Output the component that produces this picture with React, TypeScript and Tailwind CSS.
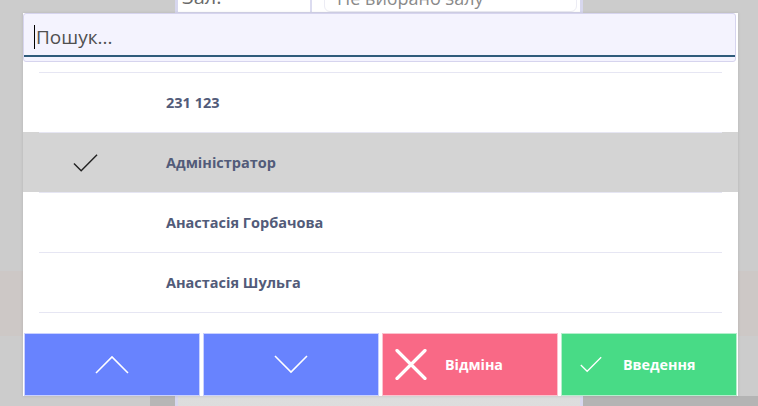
import React from "react";

const users = [
  { name: "231 123", selected: false },
  { name: "Адміністратор", selected: true },
  { name: "Анастасія Горбачова", selected: false },
  { name: "Анастасія Шульга", selected: false },
];

function Check({ className }: { className?: string }) {
  return (
    <svg viewBox="0 0 26 20" className={className} fill="none">
      <path d="M1 10.5 L8.5 18 L25 1.5" stroke="currentColor" strokeWidth="1.5" />
    </svg>
  );
}

function Chevron({ up }: { up?: boolean }) {
  return (
    <svg viewBox="0 0 34 19" className="w-[34px] h-[19px]" fill="none">
      <path d={up ? "M1 18 L17 2 L33 18" : "M1 1 L17 17 L33 1"} stroke="white" strokeWidth="1.6" />
    </svg>
  );
}

function Cross() {
  return (
    <svg viewBox="0 0 32 31" className="w-[32px] h-[31px]" fill="none">
      <path d="M2 1.5 L30 29.5 M30 1.5 L2 29.5" stroke="white" strokeWidth="3.2" strokeLinecap="round" />
    </svg>
  );
}

export default function App() {
  return (
    <div
      className="relative w-full h-[406px] overflow-hidden bg-[#cccccc]"
      style={{ fontFamily: '"Open Sans", "Noto Sans", sans-serif' }}
    >
      {/* page behind */}
      <div className="flex flex-col h-full">
        <div className="h-[271px]" />
        <div className="h-[65px] bg-[#cdc8c6]" />
        <div className="h-[60px]" />
        <div className="flex-1 flex">
          <div className="w-[150px]" />
          <div className="w-[26px] bg-[#b6b6b6]" />
          <div className="w-[407px]" />
          <div className="flex-1 bg-[#b4b4b4]" />
        </div>
      </div>

      {/* dialog behind */}
      <div className="absolute left-[175px] top-[-18px] w-[408px] h-[440px] flex flex-col border-x-[3px] border-[#d7d7ee] bg-[#e6e6e6]">
        <div className="flex h-[31px] bg-white border-b border-[#d6d6ec]">
          <div className="w-[134px] border-r-2 border-[#dcdcf0] pl-[4px] pt-[2px] text-[20px] leading-[26px] text-[#6a6a6a]">
            Зал:
          </div>
          <div className="flex-1 pl-[12px] pr-[3px]">
            <div className="h-full rounded-b-md border border-[#ececf4] pl-[12px] pt-[3px] text-[18px] leading-[24px] text-[#8a8a8a]">
              Не вибрано залу
            </div>
          </div>
        </div>
        <div className="flex-1 bg-gradient-to-b from-[#ececec] to-[#dcdcdc]" />
      </div>

      {/* select popup */}
      <div className="absolute left-[23px] top-[13px] w-[715px] h-[383px] bg-white flex flex-col shadow-[0_0_3px_rgba(0,0,0,0.12)]">
        <div className="h-[49px] mr-[2px] rounded-[3px] border border-[#d6d4ee] bg-[#f4f3fe] pt-[5px]">
          <div className="h-[38px] border-b-2 border-[#2f5b7b] flex items-center pl-[10px]">
            <span className="w-px h-[24px] bg-black mr-[1px]" />
            <span className="text-[19px] text-[#505050]">Пошук...</span>
          </div>
        </div>

        <div className="mt-[10px] flex flex-col">
          {users.map((u) => (
            <div key={u.name} className={u.selected ? "bg-[#d4d4d4]" : ""}>
              <div className="mx-4 h-[60px] border-t border-[#e6e6f3] flex items-center">
                <div className="w-[127px] pl-[34px] flex items-center">
                  {u.selected && <Check className="w-[25px] h-[20px] text-[#222]" />}
                </div>
                <span className="text-[14.5px] font-bold text-[#525b79]">{u.name}</span>
              </div>
            </div>
          ))}
          <div className="mx-4 border-t border-[#e6e6f3]" />
        </div>

        <div className="mt-auto flex gap-[3px] pl-px h-[63px]">
          <button className="w-[176px] h-full bg-[#6883fe] border border-[#c9d1ff] flex items-center justify-center">
            <Chevron up />
          </button>
          <button className="w-[176px] h-full bg-[#6883fe] border border-[#c9d1ff] flex items-center justify-center">
            <Chevron />
          </button>
          <button className="w-[176px] h-full bg-[#f96986] border border-[#fbc3cf] flex items-center pl-[12px] gap-[18px]">
            <Cross />
            <span className="text-[14.3px] font-bold text-white">Відміна</span>
          </button>
          <button className="w-[176px] h-full bg-[#48db86] border border-[#b5efcd] flex items-center pl-[17px] gap-[20px]">
            <Check className="w-[24px] h-[17px] text-white" />
            <span className="text-[14.3px] font-bold text-white">Введення</span>
          </button>
        </div>
      </div>
    </div>
  );
}
